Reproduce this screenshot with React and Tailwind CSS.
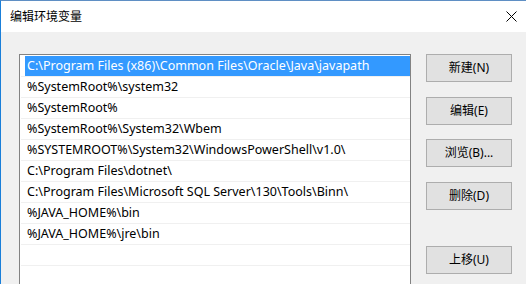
const paths = [
  "C:\\Program Files (x86)\\Common Files\\Oracle\\Java\\javapath",
  "%SystemRoot%\\system32",
  "%SystemRoot%",
  "%SystemRoot%\\System32\\Wbem",
  "%SYSTEMROOT%\\System32\\WindowsPowerShell\\v1.0\\",
  "C:\\Program Files\\dotnet\\",
  "C:\\Program Files\\Microsoft SQL Server\\130\\Tools\\Binn\\",
  "%JAVA_HOME%\\bin",
  "%JAVA_HOME%\\jre\\bin",
  "",
  "",
];

const font = { fontFamily: '"Noto Sans", "Noto Sans CJK SC", sans-serif' };

function Btn({ children, className = "" }) {
  return (
    <button
      className={`w-[86px] h-[28px] border border-[#adadad] bg-[#e1e1e1] text-[12px] text-black flex items-center justify-center ${className}`}
    >
      {children}
    </button>
  );
}

export default function App() {
  return (
    <div
      className="w-[526px] h-[284px] overflow-hidden bg-[#f0f0f0] border-l border-t border-l-[#1a7fd9] border-t-[#5f8fc4] flex flex-col"
      style={font}
    >
      <div className="h-[31px] bg-white flex items-center justify-between pl-[9px] pr-[9px] shrink-0">
        <span className="text-[12px] text-black">编辑环境变量</span>
        <svg width="11" height="11" viewBox="0 0 11 11">
          <path d="M0.5 0.5 L10.5 10.5 M10.5 0.5 L0.5 10.5" stroke="#000" strokeWidth="1" />
        </svg>
      </div>

      <div className="flex pl-[18px] pt-[22px]">
        <div className="w-[392px] h-[260px] bg-white border border-b-0 border-[#828282] pt-[1px] shrink-0">
          {paths.map((p, i) => (
            <div key={i} className="h-[21px] flex flex-col">
              <div className="h-[20px] flex items-center">
                {i === 0 ? (
                  <div className="ml-[5px] flex-1 h-[20px] bg-[#3399ff] text-white text-[12.5px] pl-[2px] flex items-center">
                    {p}
                  </div>
                ) : (
                  <div className="ml-[7px] text-[12.5px] text-black">{p}</div>
                )}
              </div>
              <div className="ml-[1px] h-[1px] bg-[#f0f0f0]" />
            </div>
          ))}
        </div>

        <div className="ml-[15px] flex flex-col">
          <Btn>新建(N)</Btn>
          <Btn className="mt-[15px]">编辑(E)</Btn>
          <Btn className="mt-[14px]">浏览(B)...</Btn>
          <Btn className="mt-[15px]">删除(D)</Btn>
          <Btn className="mt-[36px]">上移(U)</Btn>
        </div>
      </div>
    </div>
  );
}
